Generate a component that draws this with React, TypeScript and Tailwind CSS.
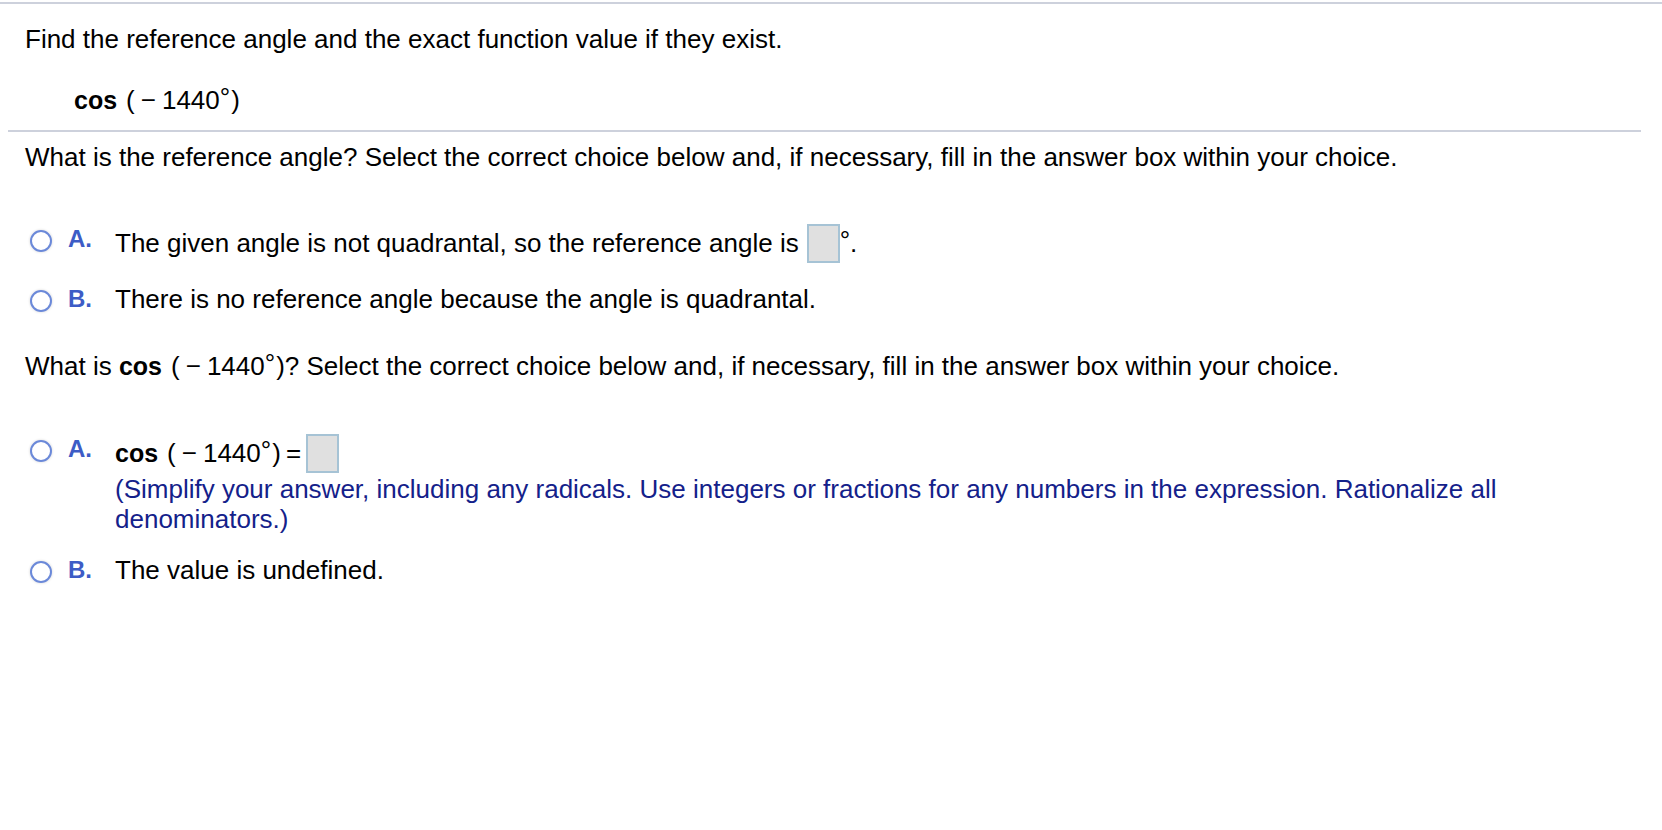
import React from "react";

function Deg() {
  return <span className="inline-block align-[3px] leading-[10px]">°</span>;
}

function Expr() {
  return (
    <span className="whitespace-nowrap">
      <span className="font-bold text-[25px]">cos</span>
      <span className="ml-[9px]">(</span>
      <span className="ml-[6px]">−</span>
      <span className="ml-[6px]">1440</span>
      <Deg />
      <span className="ml-[1px]">)</span>
    </span>
  );
}

function AnswerBox({ ml = "ml-[8px]" }: { ml?: string }) {
  return (
    <span
      className={`inline-block align-[-11px] w-[33px] h-[39px] border-2 border-[#a6c3d5] bg-[#e0e0e0] ${ml}`}
    />
  );
}

function Radio() {
  return (
    <span className="mt-[6px] block w-[22px] h-[22px] shrink-0 rounded-full border-[2.5px] border-[#6b89d9] bg-white shadow-[0_0_2px_1px_rgba(0,0,0,0.08)]" />
  );
}

function Option({
  letter,
  children,
  className = "",
}: {
  letter: string;
  children: React.ReactNode;
  className?: string;
}) {
  return (
    <div className={`flex items-start pl-[30px] ${className}`}>
      <Radio />
      <span className="ml-[16px] w-[47px] shrink-0 text-[24px] leading-[30px] font-bold text-[#3d5cc6]">
        {letter}
      </span>
      <div className="flex-1 text-[26px] leading-[30px] pr-[120px]">{children}</div>
    </div>
  );
}

export default function App() {
  return (
    <div className="min-h-[830px] w-full bg-white text-black font-['Liberation_Sans',Arial,Helvetica,sans-serif]">
      <div className="pt-[2px]">
        <div className="h-[2px] bg-[#cdd1dc]" />
      </div>

      <div className="pl-[25px] pt-[20px]">
        <p className="text-[26px] leading-[30px]">
          Find the reference angle and the exact function value if they exist.
        </p>
        <div className="mt-[31px] pl-[49px] h-[30px] text-[26px] leading-[30px]">
          <Expr />
        </div>
      </div>

      <div className="mt-[15px] ml-[8px] mr-[21px] h-[2px] bg-[#cdd1dc]" />

      <p className="mt-[10px] pl-[25px] text-[26px] leading-[30px]">
        What is the reference angle? Select the correct choice below and, if
        necessary, fill in the answer box within your choice.
      </p>

      <Option letter="A." className="mt-[52px]">
        The given angle is not quadrantal, so the reference angle is
        <AnswerBox />
        <Deg />.
      </Option>

      <Option letter="B." className="mt-[21px]">
        There is no reference angle because the angle is quadrantal.
      </Option>

      <p className="mt-[37px] pl-[25px] text-[26px] leading-[30px]">
        What is <Expr />? Select the correct choice below and, if necessary,
        fill in the answer box within your choice.
      </p>

      <Option letter="A." className="mt-[53px]">
        <div>
          <Expr />
          <span className="ml-[5px]">=</span>
          <AnswerBox ml="ml-[5px]" />
        </div>
        <p className="mt-[1px] text-[#14218a]">
          (Simplify your answer, including any radicals. Use integers or
          fractions for any numbers in the expression. Rationalize all
          denominators.)
        </p>
      </Option>

      <Option letter="B." className="mt-[21px]">
        The value is undefined.
      </Option>
    </div>
  );
}
